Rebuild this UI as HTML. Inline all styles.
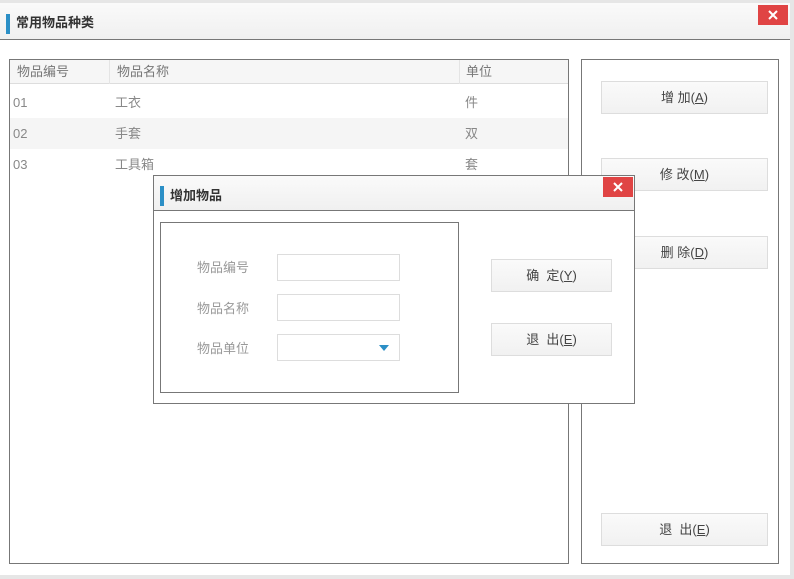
<!DOCTYPE html>
<html><head><meta charset="utf-8"><style>
*{box-sizing:border-box;margin:0;padding:0}
body{width:794px;height:579px;background:#e6e6e6;font-family:"Liberation Sans","Noto Sans CJK SC",sans-serif;position:relative;overflow:hidden}
.abs{position:absolute}
.win{left:0;top:3px;width:790px;height:572px;background:#fff}
.tbar{left:0;top:3px;width:790px;height:37px;background:linear-gradient(#fafafa,#f0f0f0);border-bottom:1px solid #777}
.acc{background:#2b8fc6;width:4px}
.ttl{font-size:13px;font-weight:bold;color:#333;line-height:20px}
.close{background:#e04444;text-align:center;width:30px;height:20px}
.close svg{position:absolute;left:10px;top:5px}
.box{border:1px solid #777}
.btn{border:1px solid #ddd;background:linear-gradient(#fafafa,#f1f1f1);font-size:13px;color:#444;text-align:center}
.cell{font-size:13px;color:#888;line-height:16px;height:16px}
u{text-decoration:underline}
.inp{border:1px solid #ddd;background:#fff;width:123px;height:27px}
</style></head><body>
<div class="abs win"></div>
<div class="abs tbar"></div>
<div class="abs acc" style="left:6px;top:14px;height:20px"></div>
<div class="abs ttl" style="left:16px;top:13px">常用物品种类</div>
<div class="abs close" style="left:758px;top:5px"><svg width="10" height="10"><path d="M1 1L9 9M9 1L1 9" stroke="#fff" stroke-width="2"/></svg></div>

<div class="abs box" style="left:9px;top:59px;width:560px;height:505px"></div>
<div class="abs" style="left:10px;top:60px;width:558px;height:24px;background:#f6f6f6;border-bottom:1px solid #ddd"></div>
<div class="abs" style="left:109px;top:60px;width:1px;height:24px;background:#e4e4e4"></div>
<div class="abs" style="left:459px;top:60px;width:1px;height:24px;background:#e4e4e4"></div>
<div class="abs cell" style="left:17px;top:64px;color:#777">物品编号</div>
<div class="abs cell" style="left:117px;top:64px;color:#777">物品名称</div>
<div class="abs cell" style="left:466px;top:64px;color:#777">单位</div>
<div class="abs" style="left:10px;top:118px;width:558px;height:31px;background:#f5f5f5"></div>
<div class="abs cell" style="left:13px;top:95px">01</div><div class="abs cell" style="left:115px;top:95px">工衣</div><div class="abs cell" style="left:465px;top:95px">件</div>
<div class="abs cell" style="left:13px;top:126px">02</div><div class="abs cell" style="left:115px;top:126px">手套</div><div class="abs cell" style="left:465px;top:126px">双</div>
<div class="abs cell" style="left:13px;top:157px">03</div><div class="abs cell" style="left:115px;top:157px">工具箱</div><div class="abs cell" style="left:465px;top:157px">套</div>

<div class="abs box" style="left:581px;top:59px;width:198px;height:505px"></div>
<div class="abs btn" style="left:601px;top:81px;width:167px;height:33px;line-height:31px">增 加(<u>A</u>)</div>
<div class="abs btn" style="left:601px;top:158px;width:167px;height:33px;line-height:31px">修 改(<u>M</u>)</div>
<div class="abs btn" style="left:601px;top:236px;width:167px;height:33px;line-height:31px">删 除(<u>D</u>)</div>
<div class="abs btn" style="left:601px;top:513px;width:167px;height:33px;line-height:31px">退&nbsp; 出(<u>E</u>)</div>

<div class="abs box" style="left:153px;top:175px;width:482px;height:229px;background:#fff"></div>
<div class="abs" style="left:154px;top:176px;width:480px;height:35px;background:linear-gradient(#fafafa,#f0f0f0);border-bottom:1px solid #777"></div>
<div class="abs acc" style="left:160px;top:186px;height:20px"></div>
<div class="abs ttl" style="left:170px;top:186px">增加物品</div>
<div class="abs close" style="left:603px;top:177px"><svg width="10" height="10"><path d="M1 1L9 9M9 1L1 9" stroke="#fff" stroke-width="2"/></svg></div>
<div class="abs box" style="left:160px;top:222px;width:299px;height:171px"></div>
<div class="abs cell" style="left:197px;top:260px;color:#999">物品编号</div>
<div class="abs cell" style="left:197px;top:301px;color:#999">物品名称</div>
<div class="abs cell" style="left:197px;top:341px;color:#999">物品单位</div>
<div class="abs inp" style="left:277px;top:254px"></div>
<div class="abs inp" style="left:277px;top:294px"></div>
<div class="abs inp" style="left:277px;top:334px"></div>
<div class="abs" style="left:379px;top:345px;width:0;height:0;border-left:5px solid transparent;border-right:5px solid transparent;border-top:6px solid #2b8fc6"></div>
<div class="abs btn" style="left:491px;top:259px;width:121px;height:33px;line-height:31px">确&nbsp; 定(<u>Y</u>)</div>
<div class="abs btn" style="left:491px;top:323px;width:121px;height:33px;line-height:31px">退&nbsp; 出(<u>E</u>)</div>
</body></html>
